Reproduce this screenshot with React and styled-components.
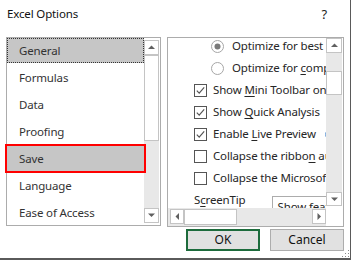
import React from "react";
import styled, { createGlobalStyle } from "styled-components";

const Global = createGlobalStyle`
  html, body { margin: 0; padding: 0; background: #ffffff; }
  body { font-family: "Segoe UI", "Noto Sans", "Open Sans", sans-serif; }
  * { box-sizing: border-box; }
`;

const Dialog = styled.div`
  position: relative;
  width: 351px;
  height: 260px;
  background: #ffffff;
  border-right: 1px solid #5a5a5a;
  border-bottom: 2px solid #5a5a5a;
  display: flex;
  flex-direction: column;
  font-size: 11.5px;
  letter-spacing: -0.15px;
  color: #262626;
  overflow: hidden;
`;

const TitleBar = styled.div`
  height: 37px;
  display: flex;
  justify-content: space-between;
  align-items: flex-start;
  padding: 5px 23px 0 7px;
  font-size: 11.5px;
  line-height: 18px;
  color: #111;
`;

const Help = styled.span`
  font-size: 13px;
  color: #222;
`;

const Main = styled.div`
  display: flex;
  gap: 6px;
  padding-left: 6px;
  align-items: flex-start;
`;

const ListBox = styled.div`
  width: 155px;
  height: 189px;
  border: 1px solid #acacac;
  display: flex;
`;

const Items = styled.div`
  width: 137px;
  display: flex;
  flex-direction: column;
  gap: 2px;
  clip-path: inset(0 -4px 0 -4px);
`;

const Item = styled.div`
  flex: none;
  height: 25px;
  line-height: 25px;
  padding-left: 12px;
  white-space: nowrap;
  color: #333;
  background: ${(p) => (p.$selected ? "#c6c6c6" : "transparent")};
  outline: ${(p) =>
    p.$focus ? "1px dotted #333" : p.$marked ? "2px solid #ff0000" : "none"};
  outline-offset: ${(p) => (p.$focus ? "-1px" : "0")};
`;

const VScroll = styled.div`
  width: ${(p) => p.$w}px;
  padding: ${(p) => p.$pad};
  display: flex;
  flex-direction: column;
`;

const HScroll = styled.div`
  padding: 1px 0 1px 2px;
  display: flex;
  background: #e8e8e8;
`;

const ArrowBtn = styled.div`
  flex: none;
  width: ${(p) => p.$w}px;
  height: ${(p) => p.$h}px;
  border: 1px solid #c4c4c4;
  background: #ffffff;
  display: flex;
  align-items: center;
  justify-content: center;
`;

const Thumb = styled.div`
  flex: none;
  width: ${(p) => (p.$w ? `${p.$w}px` : "auto")};
  height: ${(p) => (p.$h ? `${p.$h}px` : "auto")};
  border: 1px solid #c4c4c4;
  background: #ffffff;
`;

const Track = styled.div`
  flex: ${(p) => (p.$size ? `0 0 ${p.$size}px` : "1")};
  background: #e8e8e8;
`;

const Panel = styled.div`
  width: 177px;
  height: 190px;
  border: 1px solid #acacac;
  display: grid;
  grid-template-columns: 158px 17px;
  grid-template-rows: 170px 18px;
`;

const Content = styled.div`
  overflow: hidden;
`;

const Rows = styled.div`
  margin-top: -3px;
  padding-left: 26px;
  display: flex;
  flex-direction: column;
`;

const Row = styled.div`
  height: 22px;
  display: flex;
  align-items: ${(p) => (p.$top ? "flex-start" : "center")};
  gap: ${(p) => p.$gap || 6}px;
  padding-left: ${(p) => p.$indent || 0}px;
  white-space: nowrap;
  color: #262626;
  line-height: 22px;
`;

const Key = styled.u`
  text-decoration: underline;
  text-underline-offset: 2px;
`;

const SelectBox = styled.div`
  flex: none;
  margin-left: 20px;
  margin-top: 7px;
  width: 130px;
  height: 22px;
  border: 1px solid #acacac;
  padding-left: 5px;
  line-height: 20px;
  color: #262626;
`;

const Corner = styled.div`
  background: #ffffff;
`;

const Footer = styled.div`
  display: flex;
  justify-content: flex-end;
  gap: 10px;
  padding-right: 6px;
  margin-top: 2px;
`;

const Button = styled.button`
  width: 74px;
  height: 22px;
  font-family: inherit;
  font-size: 12px;
  color: #111;
  background: #e1e1e1;
  border: ${(p) => (p.$primary ? "2px solid #1d6b3c" : "1px solid #adadad")};
  padding: 0;
  line-height: 18px;
`;

const Grip = styled.svg`
  position: absolute;
  right: 0;
  bottom: 0;
`;

const Arrow = ({ dir }) => {
  const pts = {
    up: "0,4 7,4 3.5,0.5",
    down: "0,0.5 7,0.5 3.5,4",
    left: "4,0 4,7 0.5,3.5",
    right: "0.5,0 0.5,7 4,3.5",
  }[dir];
  const vertical = dir === "up" || dir === "down";
  return (
    <svg width={vertical ? 7 : 5} height={vertical ? 5 : 7} viewBox={vertical ? "0 0 7 5" : "0 0 5 7"}>
      <polygon points={pts} fill="#606060" />
    </svg>
  );
};

const Check = ({ checked }) => (
  <svg width="13" height="13" viewBox="0 0 13 13" style={{ flex: "none" }}>
    <rect x="0.5" y="0.5" width="12" height="12" fill="#fff" stroke="#555" />
    {checked && (
      <path d="M2.8 6.6 L5.2 9.1 L10.2 3.4" fill="none" stroke="#555" strokeWidth="1.2" />
    )}
  </svg>
);

const Radio = ({ checked }) => (
  <svg width="13" height="13" viewBox="0 0 13 13" style={{ flex: "none" }}>
    <circle cx="6.5" cy="6.5" r="6" fill="#fff" stroke="#a6a6a6" />
    {checked && <circle cx="6.5" cy="6.5" r="3" fill="#7a7a7a" />}
  </svg>
);

const Info = () => (
  <svg width="11" height="11" viewBox="0 0 11 11" style={{ flex: "none", marginLeft: 3 }}>
    <circle cx="5.5" cy="5.5" r="5" fill="#fff" stroke="#6a9fd8" />
    <rect x="5" y="4.5" width="1.2" height="4" fill="#6a9fd8" />
    <rect x="5" y="2.5" width="1.2" height="1.2" fill="#6a9fd8" />
  </svg>
);

const categories = ["General", "Formulas", "Data", "Proofing", "Save", "Language", "Ease of Access"];

export default function App() {
  return (
    <>
      <Global />
      <Dialog>
        <TitleBar>
          <span>Excel Options</span>
          <Help>?</Help>
        </TitleBar>
        <Main>
          <ListBox>
            <Items>
              {categories.map((c) => (
                <Item
                  key={c}
                  $selected={c === "General" || c === "Save"}
                  $focus={c === "General"}
                  $marked={c === "Save"}
                >
                  {c}
                </Item>
              ))}
            </Items>
            <VScroll $w={16} $pad="2px 1px 2px 0">
              <ArrowBtn $w={15} $h={15}>
                <Arrow dir="up" />
              </ArrowBtn>
              <Thumb $h={86} />
              <Track />
              <ArrowBtn $w={15} $h={15}>
                <Arrow dir="down" />
              </ArrowBtn>
            </VScroll>
          </ListBox>
          <Panel>
            <Content>
              <Rows>
                <Row $indent={17} $gap={8}>
                  <Radio checked />
                  <span>Optimize for best appearance</span>
                </Row>
                <Row $indent={17} $gap={8}>
                  <Radio />
                  <span>
                    Optimize for <Key>c</Key>ompatibility
                  </span>
                </Row>
                <Row>
                  <Check checked />
                  <span>
                    Show <Key>M</Key>ini Toolbar on selection
                  </span>
                </Row>
                <Row>
                  <Check checked />
                  <span>
                    Show <Key>Q</Key>uick Analysis
                  </span>
                  <Info />
                </Row>
                <Row>
                  <Check checked />
                  <span>
                    Enable <Key>L</Key>ive Preview
                  </span>
                  <Info />
                </Row>
                <Row>
                  <Check />
                  <span>
                    Collapse the ribbo<Key>n</Key> automatically
                  </span>
                </Row>
                <Row>
                  <Check />
                  <span>Collapse the Microsoft Search box</span>
                </Row>
                <Row $top $gap={0}>
                  <span>
                    S<Key>c</Key>reenTip
                  </span>
                  <SelectBox>Show feature descriptions</SelectBox>
                </Row>
              </Rows>
            </Content>
            <VScroll $w={17} $pad="0 1px 2px 0">
              <ArrowBtn $w={16} $h={15}>
                <Arrow dir="up" />
              </ArrowBtn>
              <Track $size={18} />
              <Thumb $h={24} />
              <Track />
              <ArrowBtn $w={16} $h={14}>
                <Arrow dir="down" />
              </ArrowBtn>
            </VScroll>
            <HScroll>
              <ArrowBtn $w={14} $h={15}>
                <Arrow dir="left" />
              </ArrowBtn>
              <Thumb $w={53} />
              <Track />
              <ArrowBtn $w={14} $h={15}>
                <Arrow dir="right" />
              </ArrowBtn>
            </HScroll>
            <Corner />
          </Panel>
        </Main>
        <Footer>
          <Button $primary>OK</Button>
          <Button>Cancel</Button>
        </Footer>
        <Grip width="9" height="9" viewBox="0 0 9 9">
          <rect x="7" y="1" width="1" height="1" fill="#8a8a8a" />
          <rect x="4" y="4" width="1" height="1" fill="#8a8a8a" />
          <rect x="7" y="4" width="1" height="1" fill="#8a8a8a" />
          <rect x="1" y="7" width="1" height="1" fill="#8a8a8a" />
          <rect x="4" y="7" width="1" height="1" fill="#8a8a8a" />
          <rect x="7" y="7" width="1" height="1" fill="#8a8a8a" />
        </Grip>
      </Dialog>
    </>
  );
}
